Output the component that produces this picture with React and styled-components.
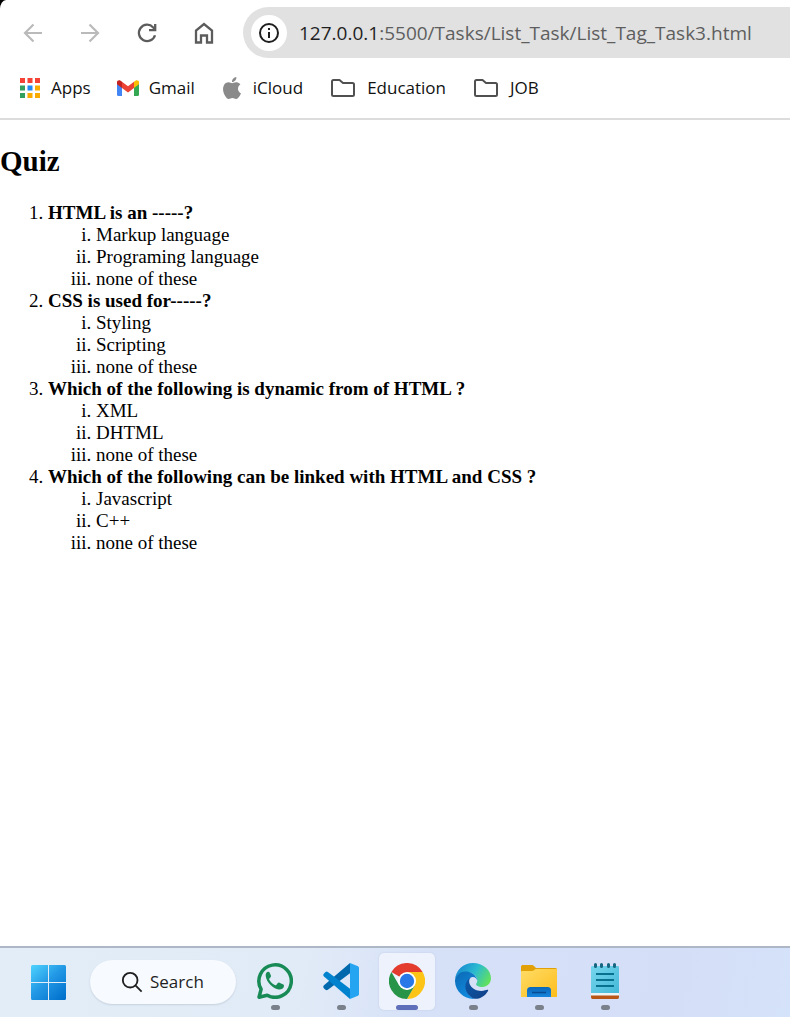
import React from "react";
import styled, { createGlobalStyle } from "styled-components";
import { SiApple } from "react-icons/si";

const GlobalStyle = createGlobalStyle`
  * { box-sizing: border-box; }
  body { margin: 0; background: #000; }
`;

const uiFont = `"Open Sans", "Noto Sans", sans-serif`;

const Screen = styled.div`
  display: flex;
  flex-direction: column;
  min-height: 100vh;
  overflow: hidden;
  background: #fff;
  border-top-left-radius: 6px 9px;
  font-family: ${uiFont};
`;

const Toolbar = styled.header`
  display: flex;
  align-items: center;
  padding: 7px 0 0 15px;
`;

const NavButtons = styled.nav`
  display: flex;
  gap: 21px;
  margin-right: 21px;
`;

const IconButton = styled.button`
  display: grid;
  place-items: center;
  width: 36px;
  height: 36px;
  padding: 0;
  border: 0;
  background: none;
  color: ${(p) => (p.disabled ? "#bababa" : "#5c5c5c")};
`;

const AddressBar = styled.div`
  display: flex;
  flex: 1;
  align-items: center;
  gap: 12px;
  height: 51px;
  padding-left: 8px;
  border-radius: 26px 0 0 26px;
  background: #e1e1e1;
  overflow: hidden;
`;

const SiteInfo = styled(IconButton)`
  flex: none;
  border-radius: 50%;
  background: #fff;
  color: #1f1f1f;
`;

const Url = styled.a`
  color: #5e5e5e;
  font-size: 19px;
  line-height: 28px;
  text-decoration: none;
  white-space: nowrap;
`;

const Host = styled.span`
  color: #1f1f1f;
`;

const BookmarksBar = styled.nav`
  display: flex;
  align-items: center;
  gap: 26px;
  height: 62px;
  padding: 0 19px;
  border-bottom: 2px solid #dcdcdc;
`;

const Bookmark = styled.a`
  display: flex;
  align-items: center;
  gap: 10px;
  color: #111;
  font-size: 17px;
  line-height: 24px;
  text-decoration: none;
`;

const Page = styled.main`
  flex: 1;
  padding-top: 1px;
  color: #000;
  font-family: "Liberation Serif", "Times New Roman", serif;
  font-size: 19px;
  line-height: 22px;
`;

const Title = styled.h2`
  margin: 24px 0;
  font-size: 29px;
  line-height: 33px;
`;

const Questions = styled.ol`
  margin: 0;
  padding-left: 48px;
`;

const Answers = styled.ol`
  margin: 0;
  padding-left: 48px;
  list-style-type: lower-roman;
`;

const Taskbar = styled.footer`
  display: flex;
  align-items: center;
  height: 71px;
  padding: 0 31px 2px;
  border-top: 2px solid #adb7c6;
  background: linear-gradient(100deg, #e2edf7 0%, #e1ebf7 38%, #d6e1f8 54%, #d5def7 85%, #d4e2fa 100%);
`;

const StartButton = styled(IconButton)`
  flex: none;
  margin-right: 23px;
`;

const SearchButton = styled.button`
  display: flex;
  flex: none;
  align-items: center;
  gap: 7px;
  width: 146px;
  height: 44px;
  padding: 0 0 0 31px;
  border: 0;
  border-radius: 22px;
  background: #f7fafe;
  box-shadow: 0 1px 2px #c5d0dd;
  color: #1f1f1f;
  font-family: ${uiFont};
  font-size: 17px;
`;

const Apps = styled.nav`
  display: flex;
  gap: 10px;
  margin-left: 11px;
`;

const AppButton = styled.button`
  display: flex;
  flex-direction: column;
  align-items: center;
  justify-content: space-between;
  width: 56px;
  height: 57px;
  padding: 10px 0 0;
  border: 0;
  border-radius: 5px;
  background: ${(p) => (p.$active ? "#edf2fd" : "none")};
  box-shadow: ${(p) => (p.$active ? "0 0 2px #bdc9df" : "none")};
`;

const Indicator = styled.span`
  width: ${(p) => (p.$active ? "22px" : "9px")};
  height: 5px;
  border-radius: 3px;
  background: ${(p) => (p.$active ? "#5f6fba" : "#7b818b")};
`;

const Stroke = ({ children, width = 2, size = 24 }) => (
  <svg width={size} height={size} viewBox="0 0 24 24" fill="none" stroke="currentColor" strokeWidth={width} aria-hidden="true">
    {children}
  </svg>
);

const AppsIcon = () => {
  const colors = ["#f44336", "#f44336", "#f44336", "#34a060", "#1e88f5", "#f9ab00", "#34a060", "#f9ab00", "#f9ab00"];
  return (
    <svg width="22" height="22" viewBox="0 0 22 22" aria-hidden="true">
      {colors.map((c, i) => (
        <rect key={i} x={1 + (i % 3) * 7.5} y={1 + Math.floor(i / 3) * 7.5} width="5" height="5" fill={c} />
      ))}
    </svg>
  );
};

const GmailIcon = () => (
  <svg width="22" height="22" viewBox="0 0 22 22" aria-hidden="true">
    <path d="M0 6v11.500Q0 19 1.500 19H5V9.500z" fill="#4285f4" />
    <path d="M17 9.500V19h3.500q1.500 0 1.500-1.500V6z" fill="#34a853" />
    <path d="M5 4.800v6.200l6 4.500 6-4.500V4.800l-6 4.500z" fill="#ea4335" />
    <path d="M0 5v2.300L5 11V4.800L3.600 3.700C2.100 2.600 0 3.500 0 5z" fill="#c5221f" />
    <path d="M17 4.800V11l5-3.700V5c0-1.500-2.100-2.400-3.600-1.300z" fill="#fbbc04" />
  </svg>
);

const AppleIcon = () => <SiApple size={22} color="#8a8a8a" aria-hidden="true" />;

const FolderIcon = () => (
  <svg width="28" height="20" viewBox="-1 0 28 20" fill="none" stroke="#505050" strokeWidth="2" strokeLinejoin="round" aria-hidden="true">
    <path d="M3.500 2H9.500L13 5H22.500Q24 5 24 6.500V16.500Q24 18 22.500 18H3.500Q2 18 2 16.500V3.500Q2 2 3.500 2z" />
  </svg>
);

const WindowsIcon = () => (
  <svg width="36" height="36" viewBox="0 0 36 36" aria-hidden="true">
    <defs>
      <linearGradient id="win" gradientUnits="userSpaceOnUse" x1="0" y1="0" x2="32" y2="36">
        <stop stopColor="#50d5ff" />
        <stop offset=".5" stopColor="#2298e5" />
        <stop offset="1" stopColor="#0070cc" />
      </linearGradient>
    </defs>
    <path fill="url(#win)" d="M1.500 1H17V18H0V2.500Q0 1 1.500 1zM18 1H33.500Q35 1 35 2.500V18H18zM0 19H17V36H1.500Q0 36 0 34.500zM18 19H35V34.500Q35 36 33.500 36H18z" />
  </svg>
);

const AppIcon = ({ children }) => (
  <svg width="36" height="36" viewBox="0 0 36 36" aria-hidden="true">
    {children}
  </svg>
);

const WhatsAppIcon = () => (
  <AppIcon>
    <path d="M2 34.200L4.100 26.200A16.200 16.200 0 1 1 10.200 32.200z" fill="none" stroke="#178a55" strokeWidth="3.500" strokeLinejoin="round" />
    <path d="M12.600 9.600c-.5-.9-1-.9-1.700-.8C9.300 9.200 8.500 11 8.700 13c.7 6.300 7.300 12.900 13.200 13.400 2.300.2 4.700-1.100 5-3 .2-1 0-1.500-.6-1.800L22.500 19.700c-.8-.4-1.200-.2-1.700.4l-1.500 1.800c-.4.5-.9.5-1.500.2-2.400-1.100-4.400-3.100-5.500-5.300-.3-.6-.2-.9.200-1.400l1.200-1.500c.4-.5.4-1 .2-1.500z" fill="#178a55" />
  </AppIcon>
);

const CodeIcon = () => (
  <AppIcon>
    <path d="M27 0L1 22.300Q-.5 23.800 1 25.400L2.500 26.800Q3.700 27.600 4.900 26.700L27 10.200z" fill="#0069ad" />
    <path d="M27 36L1 13.500Q-.5 12 1 10.400L2.500 9Q3.700 8.200 4.900 9.100L27 25.800z" fill="#0083cf" />
    <path d="M27 0L35 3.300Q36 3.800 36 5V31Q36 32.200 35 32.700L27 36Z" fill="#25a4f1" />
  </AppIcon>
);

const ChromeIcon = () => (
  <AppIcon>
    <path d="M18 18L2.400 9A18 18 0 0 1 33.600 9z" fill="#e33b2e" />
    <path d="M18 9H33.600A18 18 0 0 1 18 36L25.800 22.500z" fill="#fcc417" />
    <path d="M2.400 9A18 18 0 0 0 18 36L25.800 22.500 18 27 10.200 22.500z" fill="#279447" />
    <circle cx="18" cy="18" r="9" fill="#fff" />
    <circle cx="18" cy="18" r="7.200" fill="#2878e8" />
  </AppIcon>
);

const EdgeIcon = () => (
  <AppIcon>
    <defs>
      <linearGradient id="edgeTop" x1="0" y1=".3" x2="1" y2=".7">
        <stop stopColor="#1688d2" />
        <stop offset=".5" stopColor="#2bbbd0" />
        <stop offset="1" stopColor="#65e357" />
      </linearGradient>
      <linearGradient id="edgeLeft" x1="0" y1="0" x2=".6" y2="1">
        <stop stopColor="#0b69b4" />
        <stop offset="1" stopColor="#118be0" />
      </linearGradient>
      <linearGradient id="edgeBottom" x1="0" y1="0" x2="1" y2="1">
        <stop stopColor="#0a5aaa" />
        <stop offset="1" stopColor="#123f86" />
      </linearGradient>
    </defs>
    <path d="M0 17C.5 7 8.500 0 18 0c10 0 18 6.900 18 15.300C36 20.500 32 24 27.500 24c-4 0-6.400-1.400-6.400-2.700 0-1 1.200-1.300 1.200-3.500C22.300 12 15 8.500 9 9.200 4.500 9.700 1.200 13 0 17z" fill="url(#edgeTop)" />
    <path d="M0 17C1.500 11 6 8 11.500 8.500c5.500.5 10.600 4.500 10.800 9.300-.3-2-1.900-3.800-4.600-3.900-3.200.4-6.700 3.900-6.700 9.300 0 5.800 4 11.500 9 12.600C9.500 36.800-.4 28.500 0 17z" fill="url(#edgeLeft)" />
    <path d="M17 14c-3.300 1.400-3.200 5-2.100 7.500 1.900 4.200 6.400 6.400 11.200 6.400 3.300 0 5-1.200 6.300-1.200.8 0 1 .5.6 1.200C30 33 25.500 35.800 20 35.800c-5.500-1.300-9.600-6.500-9.600-12.300 0-5.200 3.100-8.500 6.600-9.500z" fill="url(#edgeBottom)" />
  </AppIcon>
);

const ExplorerIcon = () => (
  <AppIcon>
    <defs>
      <linearGradient id="folder" x1="0" y1="0" x2="1" y2="1">
        <stop stopColor="#ffdc67" />
        <stop offset="1" stopColor="#fdbd1b" />
      </linearGradient>
      <linearGradient id="folderPocket" x1="0" y1="0" x2="0" y2="1">
        <stop stopColor="#0b67b8" />
        <stop offset="1" stopColor="#1685dd" />
      </linearGradient>
    </defs>
    <path d="M0 10V3.500Q0 2 1.500 2H11Q12 2 13 3L15 5H34.500Q36 5 36 6.500V12H0z" fill="#e1a005" />
    <path d="M0 9Q0 8 1 8H11Q12 8 13 7.200L14.500 6H35Q36 6 36 7V34H0z" fill="url(#folder)" />
    <path d="M6 34V27.500Q6 24 9.500 24H26.500Q30 24 30 27.500V34z" fill="url(#folderPocket)" />
    <path d="M11 29.500H25" stroke="#084b91" strokeWidth="1.500" />
  </AppIcon>
);

const NotepadIcon = () => (
  <AppIcon>
    <defs>
      <linearGradient id="pad" x1="0" y1="0" x2="1" y2="1">
        <stop stopColor="#78d6ee" />
        <stop offset="1" stopColor="#43b8d7" />
      </linearGradient>
    </defs>
    <path d="M4 31H32V34Q32 36 30.500 36H5.500Q4 36 4 34z" fill="#b75616" />
    <path d="M4 29H32V32.500H4z" fill="#eef3f5" />
    <path d="M4 4Q4 3 5.500 3H30.500Q32 3 32 4V30H4z" fill="url(#pad)" />
    <path d="M9 11H27M9 17H27M9 23H27" stroke="#08718f" strokeWidth="2" />
    <path d="M8.500 1.500V3.500M14.500 1.500V3.500M21.500 1.500V3.500M27.500 1.500V3.500" stroke="#166681" strokeWidth="3" strokeLinecap="round" />
  </AppIcon>
);

const bookmarks = [
  ["Apps", AppsIcon],
  ["Gmail", GmailIcon],
  ["iCloud", AppleIcon],
  ["Education", FolderIcon],
  ["JOB", FolderIcon],
];

const quiz = [
  ["HTML is an -----?", ["Markup language", "Programing language", "none of these"]],
  ["CSS is used for-----?", ["Styling", "Scripting", "none of these"]],
  ["Which of the following is dynamic from of HTML ?", ["XML", "DHTML", "none of these"]],
  ["Which of the following can be linked with HTML and CSS ?", ["Javascript", "C++", "none of these"]],
];

const apps = [
  ["WhatsApp", WhatsAppIcon],
  ["Visual Studio Code", CodeIcon],
  ["Google Chrome", ChromeIcon],
  ["Microsoft Edge", EdgeIcon],
  ["File Explorer", ExplorerIcon],
  ["Notepad", NotepadIcon],
];

export default function App() {
  return (
    <>
      <GlobalStyle />
      <Screen>
        <Toolbar>
          <NavButtons aria-label="Navigation">
            <IconButton aria-label="Back" disabled>
              <Stroke width={2.2}><path d="M21 12H4.500M12.500 3.500L4 12L12.500 20.500" /></Stroke>
            </IconButton>
            <IconButton aria-label="Forward" disabled>
              <Stroke width={2.2}><path d="M3 12H19.500M11.500 3.500L20 12L11.500 20.500" /></Stroke>
            </IconButton>
            <IconButton aria-label="Reload">
              <Stroke width={2.3}><path d="M20 14.200A8.200 8.200 0 1 1 18.200 6.400L20 8.300M20.200 3V9.200H14" /></Stroke>
            </IconButton>
            <IconButton aria-label="Home">
              <Stroke width={2.3}><path d="M4 21.500V9.500L12 3L20 9.500V21.500H15V14.500H9V21.500z" /></Stroke>
            </IconButton>
          </NavButtons>
          <AddressBar>
            <SiteInfo aria-label="Site information">
              <Stroke>
                <circle cx="12" cy="12" r="9" />
                <path d="M12 11V17M12 7V9" />
              </Stroke>
            </SiteInfo>
            <Url href="#">
              <Host>127.0.0.1</Host>:5500/Tasks/List_Task/List_Tag_Task3.html
            </Url>
          </AddressBar>
        </Toolbar>
        <BookmarksBar aria-label="Bookmarks">
          {bookmarks.map(([name, Icon]) => (
            <Bookmark href="#" key={name}>
              <Icon />
              {name}
            </Bookmark>
          ))}
        </BookmarksBar>
        <Page>
          <Title>Quiz</Title>
          <Questions>
            {quiz.map(([question, answers]) => (
              <li key={question}>
                <b>{question}</b>
                <Answers>
                  {answers.map((answer) => (
                    <li key={answer}>{answer}</li>
                  ))}
                </Answers>
              </li>
            ))}
          </Questions>
        </Page>
        <Taskbar>
          <StartButton aria-label="Start">
            <WindowsIcon />
          </StartButton>
          <SearchButton>
            <Stroke width={2} size={22}>
              <circle cx="10" cy="10" r="8" />
              <path d="M16 16L22.500 22.500" />
            </Stroke>
            Search
          </SearchButton>
          <Apps aria-label="Running apps">
            {apps.map(([name, Icon]) => {
              const active = name === "Google Chrome";
              return (
                <AppButton key={name} aria-label={name} $active={active}>
                  <Icon />
                  <Indicator $active={active} />
                </AppButton>
              );
            })}
          </Apps>
        </Taskbar>
      </Screen>
    </>
  );
}
